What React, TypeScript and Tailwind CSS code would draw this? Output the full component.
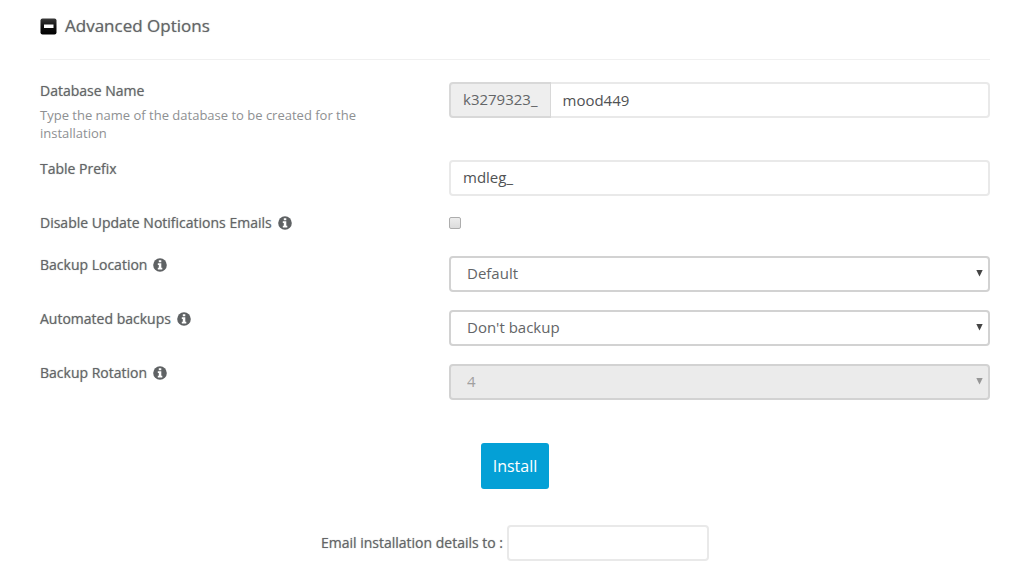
import React from "react";

function InfoIcon() {
  return (
    <svg viewBox="0 0 14 14" className="mt-0.5 size-3.5 shrink-0" aria-hidden="true">
      <circle cx="7" cy="7" r="6.8" fill="#5f6264" />
      <path d="M5.8 2.2h2.5v2H5.8zM4.8 5.2h3.5v4.6h1v1.7H4.8V9.8h1V6.9h-1z" fill="#fff" />
    </svg>
  );
}

function Row({ id, label, info, note, children }: {
  id: string;
  label: string;
  info?: boolean;
  note?: string;
  children: React.ReactNode;
}) {
  return (
    <div className="grid grid-cols-[409fr_541fr]">
      <div className="pr-16">
        <div className="flex gap-1.5">
          <label htmlFor={id} className="text-sm leading-[18px] [text-shadow:0_0_1px_#63656799]">{label}</label>
          {info && <InfoIcon />}
        </div>
        {note && <p className="mt-1.5 text-[13px] leading-[18px] text-[#8e9092]">{note}</p>}
      </div>
      <div className="min-w-0">{children}</div>
    </div>
  );
}

function Select({ id, value, disabled }: { id: string; value: string; disabled?: boolean }) {
  return (
    <div className="relative">
      <select
        id={id}
        disabled={disabled}
        className="block h-9 w-full appearance-none rounded border-2 border-[#d2d2d2] bg-white px-4 pb-0.5 text-[15px] text-[#636567] disabled:bg-[#ebebeb] disabled:text-[#a0a0a0] disabled:opacity-100"
      >
        <option>{value}</option>
      </select>
      <svg
        viewBox="0 0 7 7"
        className={disabled ? "pointer-events-none absolute top-3.5 right-[7px] size-[7px] text-[#969696]" : "pointer-events-none absolute top-3.5 right-[7px] size-[7px] text-[#444]"}
        aria-hidden="true"
      >
        <path d="M0.3 0h6.4L3.5 6.5z" fill="currentColor" />
      </svg>
    </div>
  );
}

export default function App() {
  return (
    <main className="bg-white pt-3.5 pr-[34px] pb-5 pl-10 font-['Open_Sans','Noto_Sans',sans-serif] text-[#636567]">
      <header className="flex items-center gap-2 border-b border-[#f0f0f0] pb-[21px]">
        <button type="button" aria-label="Collapse" className="size-[17px]">
          <svg viewBox="0 0 17 17" className="size-[17px]">
            <defs>
              <linearGradient id="tile" x1="0" y1="0" x2="0" y2="1">
                <stop offset="0" stopColor="#3a3a3a" />
                <stop offset="0.5" stopColor="#111" />
                <stop offset="1" stopColor="#000" />
              </linearGradient>
            </defs>
            <rect x="0.5" y="0.5" width="16" height="16" rx="2" fill="url(#tile)" />
            <rect x="4" y="6.5" width="9.5" height="3.5" fill="#fff" />
          </svg>
        </button>
        <h1 className="text-[17px] leading-6 [text-shadow:0_0_1px_#63656799]">Advanced Options</h1>
      </header>

      <form onSubmit={(e) => e.preventDefault()}>
        <div className="mt-[22px] flex flex-col gap-[18px]">
          <Row
            id="database"
            label="Database Name"
            note="Type the name of the database to be created for the installation"
          >
            <div className="flex">
              <span className="flex h-9 items-center rounded-l border-2 border-r-1 border-[#d8d8d8] bg-[#eeeeee] px-3 pb-0.5 text-[15px]">k3279323_</span>
              <input
                id="database"
                type="text"
                defaultValue="mood449"
                className="h-9 min-w-0 flex-1 rounded-r border-2 border-l-0 border-[#e9e9e9] px-3 text-[15px] text-[#505254]"
              />
            </div>
          </Row>
          <Row id="prefix" label="Table Prefix">
            <input
              id="prefix"
              type="text"
              defaultValue="mdleg_"
              className="block h-9 w-full rounded border-2 border-[#e9e9e9] px-3 pb-0.5 text-[15px] text-[#505254]"
            />
          </Row>
          <Row id="notify" label="Disable Update Notifications Emails" info>
            <div className="h-6 pt-[3px]">
              <input
                id="notify"
                type="checkbox"
                className="block size-3 appearance-none rounded-xs border border-[#adadad] bg-linear-to-b from-[#ededed] to-[#dcdcdc]"
              />
            </div>
          </Row>
          <Row id="location" label="Backup Location" info>
            <Select id="location" value="Default" />
          </Row>
          <Row id="automated" label="Automated backups" info>
            <Select id="automated" value="Don't backup" />
          </Row>
          <Row id="rotation" label="Backup Rotation" info>
            <Select id="rotation" value="4" disabled />
          </Row>
        </div>

        <div className="mt-[43px] flex justify-center">
          <button type="submit" className="h-[46px] rounded-[3px] bg-[#04a0d6] px-3 text-base text-white">Install</button>
        </div>
        <div className="mt-9 flex items-center justify-center gap-1">
          <label htmlFor="email" className="text-sm [text-shadow:0_0_1px_#63656799]">Email installation details to :</label>
          <input id="email" type="email" className="h-9 w-[202px] rounded border-2 border-[#e9e9e9] px-3 text-[15px]" />
        </div>
      </form>
    </main>
  );
}
